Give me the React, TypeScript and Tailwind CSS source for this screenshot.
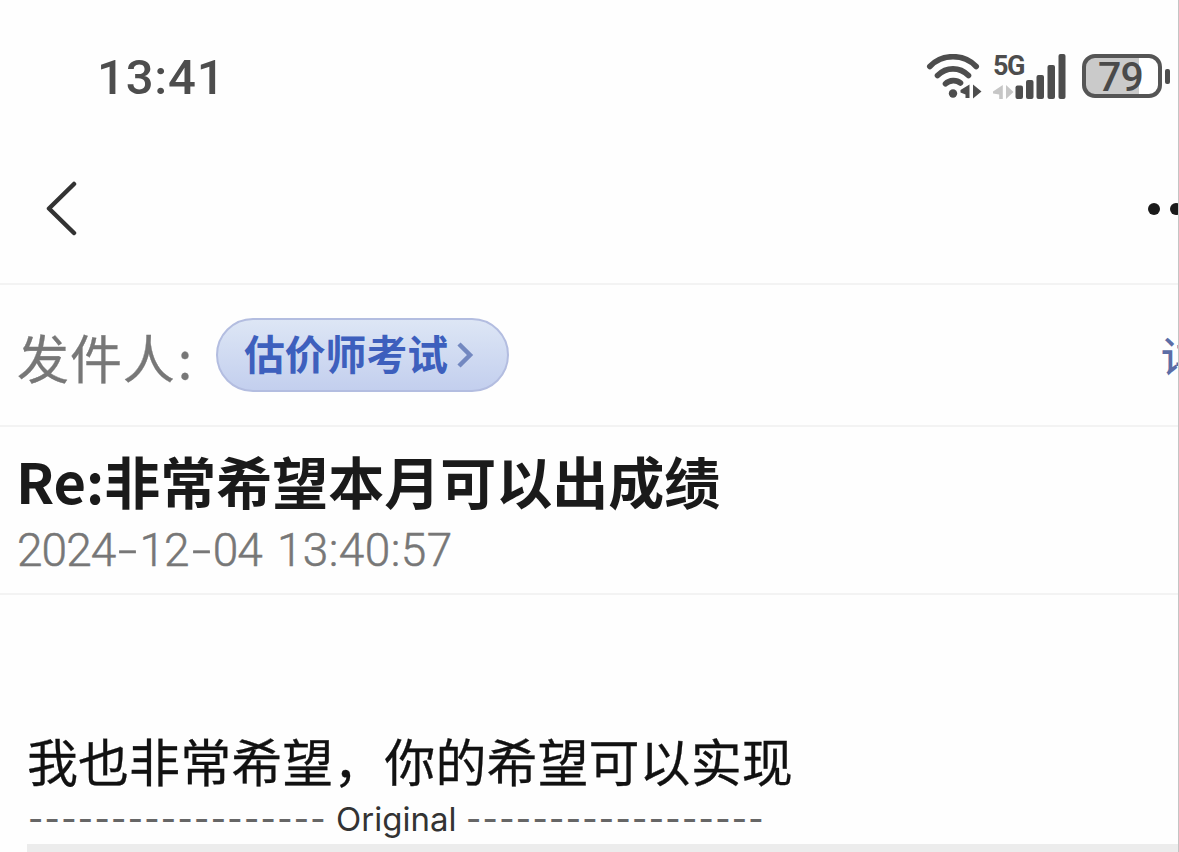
import type { ReactNode } from "react";

const WifiIcon = () => (
  <svg width="56" height="46" viewBox="0 0 56 46" fill="none" className="shrink-0">
    <g stroke="#4d4d4d" strokeWidth="5.6" strokeLinecap="round">
      <path d="M3.8 12.5C16 -0.6 38 -0.6 50.2 12.5" />
      <path d="M11.5 21.5C20.5 12.6 33.5 12.6 42.5 21.5" />
      <path d="M19.5 29.8C23.5 25.8 30.5 25.6 34.5 29" />
    </g>
    <circle cx="27" cy="39.5" r="4.2" fill="#4d4d4d" />
    <path d="M43.5 30.5V44H39.5V40.5L34.5 38.5V36ZM47 30.5L55.5 37.5L47 44.5Z" fill="#4d4d4d" />
  </svg>
);

const SignalBars = () => (
  <svg width="74" height="46" viewBox="0 0 74 46" className="absolute left-0 top-0">
    <path d="M9.8 31V45H6.2V40.5L0 39.5V37.5ZM13 31L20.5 38L13 45Z" fill="#c6c6c6" />
    <g fill="#4d4d4d">
      <rect x="22.5" y="31.5" width="7.5" height="13.5" rx="2" />
      <rect x="33" y="26" width="7.5" height="19" rx="2" />
      <rect x="43.5" y="21" width="7.5" height="24" rx="2" />
      <rect x="54.5" y="11" width="7.5" height="34" rx="2" />
      <rect x="65.5" y="0" width="7" height="45" rx="2" />
    </g>
  </svg>
);

const Battery = () => (
  <div className="flex items-center">
    <div className="flex h-[44px] w-[80px] items-center rounded-[13px] border-4 border-[#555555] bg-linear-to-r from-[#cacaca] from-74% to-white to-74%">
      <span className="mt-px ml-[12px] font-['Roboto',sans-serif] text-[41px] leading-[36px] font-medium tracking-[-0.8px] text-[#4a4a4a]">
        79
      </span>
    </div>
    <div className="ml-[3px] h-[15px] w-[5px] rounded-[2px] bg-[#4d4d4d]" />
  </div>
);

const Row = ({ className, children }: { className: string; children: ReactNode }) => (
  <div className={`flex border-b-2 border-[#f3f3f3] ${className}`}>{children}</div>
);

const Dash = () => <span className="inline-block w-[24px] scale-x-150 text-center">-</span>;

const App = () => {
  return (
    <div className="flex h-[852px] w-[1179px] flex-col overflow-hidden border-r border-[#c4c4c4] bg-[#fefefe] font-['Noto_Sans_CJK_SC',sans-serif] whitespace-nowrap">
      {/* Status bar */}
      <div className="flex h-[150px] shrink-0 items-start justify-between pt-[54px] pr-[8px] pl-[97px]">
        <span className="pt-px font-['Roboto',sans-serif] text-[49px] leading-[46px] font-medium tracking-[0.8px] text-[#4d4d4d]">
          13:41
        </span>
        <div className="flex items-start">
          <WifiIcon />
          <div className="relative ml-[11px] h-[46px] w-[74px]">
            <SignalBars />
            <span className="block font-['Roboto',sans-serif] text-[27px] leading-[24px] font-bold tracking-[-1.5px] text-[#4d4d4d]">
              5G
            </span>
          </div>
          <div className="ml-[15px]">
            <Battery />
          </div>
        </div>
      </div>

      {/* Navigation */}
      <Row className="h-[135px] shrink-0 items-start justify-between pt-[30px] pl-[44px]">
        <svg width="34" height="56" viewBox="0 0 34 56" fill="none">
          <path d="M30 4L5 28.5L30 53" stroke="#333333" strokeWidth="4.5" strokeLinecap="round" strokeLinejoin="round" />
        </svg>
        <svg width="31" height="14" viewBox="0 0 31 14" fill="#1a1a1a" className="mt-[22px]">
          <circle cx="7" cy="7" r="6" />
          <circle cx="29" cy="7" r="6" />
        </svg>
      </Row>

      {/* Sender */}
      <Row className="h-[142px] shrink-0 items-center">
        <span className="w-[216px] pt-[3px] pl-[17px] text-[52px] leading-[72px] tracking-[0.9px] text-[#777777] [-webkit-text-stroke:0.3px_#777777]">
          发件人<span className="ml-[2px]">:</span>
        </span>
        <div className="flex h-[74px] w-[293px] items-center rounded-full border-2 border-[#b3bde0] bg-linear-to-b from-[#dde6f5] to-[#c3cfee] pl-[26px]">
          <span className="pb-[4px] text-[40.8px] leading-[60px] font-bold text-[#3d5fbd]">估价师考试</span>
          <svg width="18" height="28" viewBox="0 0 18 28" fill="none" className="ml-[8px]">
            <path d="M3 3L14 14L3 25" stroke="#7388c0" strokeWidth="4.5" />
          </svg>
        </div>
        <span className="ml-[652px] w-[17px] overflow-hidden pb-[3px] text-[41px] leading-[60px] font-medium text-[#5c6da6]">详情</span>
      </Row>

      {/* Subject */}
      <Row className="h-[168px] shrink-0 flex-col items-start pt-[17px] pl-[16px]">
        <h1 className="text-[56px] leading-[72px] font-bold text-[#1a1a1a]">Re:非常希望本月可以出成绩</h1>
        <p className="mt-[11px] ml-px font-['Roboto',sans-serif] text-[46px] leading-[46px] font-light tracking-[-0.9px] text-[#777777] [-webkit-text-stroke:0.5px_#777777]">
          2024
          <Dash />
          12
          <Dash />
          04<span className="ml-[15px] tracking-[0.4px]">13:40:57</span>
        </p>
      </Row>

      {/* Message */}
      <div className="flex grow flex-col pt-[129px] pl-[27px]">
        <p className="text-[51px] leading-[72px] tracking-[0.05px] text-[#111111] [-webkit-text-stroke:0.3px_#111111]">
          我也非常希望，你的希望可以实现
        </p>
        <div className="mt-[3px] flex items-center font-['Inter',sans-serif] text-[33px] leading-[40px] text-[#333333]">
          <span className="w-[309px] pl-px font-medium tracking-[1.35px] text-[#666666]">------------------</span>
          <span className="w-[130px]">Original</span>
          <span className="font-medium tracking-[1.35px] text-[#666666]">------------------</span>
        </div>
        <div className="mt-[5px] grow bg-[#ececec]" />
      </div>
    </div>
  );
};

export default App;
